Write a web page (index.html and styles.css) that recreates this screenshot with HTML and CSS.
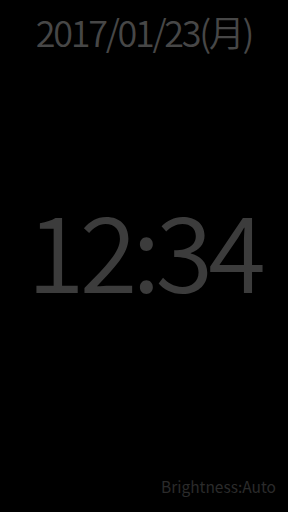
FILE: index.html
```html
<!DOCTYPE html>
<html>
  <head>
    <meta charset='utf-8'>
    <title>Clock</title>
    <link rel="stylesheet" href="styles.css">
  </head>
  <body>
    <div class='screen'>
      <div class='date'>2017/01/23(月)</div>
      <div class='time'>12:34</div>
      <div class='brightness'>Brightness:Auto</div>
    </div>
  </body>
</html>
```

FILE: styles.css
```css
html, body {
  margin: 0;
  padding: 0;
  background-color: #000;
}
body {
  font-family: "Noto Sans CJK JP", "Noto Sans", sans-serif;
}
.screen {
  height: 512px;
  display: flex;
  flex-direction: column;
  overflow: hidden;
}
.date {
  color: #474747;
  font-size: 36px;
  font-weight: 350;
  letter-spacing: -2.3px;
  text-align: center;
  line-height: 1;
  padding-top: 13px;
}
.time {
  margin-top: 146px;
  color: #3c3c3c;
  font-size: 105px;
  font-weight: 350;
  letter-spacing: -5px;
  text-align: center;
  line-height: 1;
}
.brightness {
  margin-top: auto;
  color: #2b2b2b;
  font-size: 15.5px;
  text-align: right;
  padding-right: 12px;
  padding-bottom: 15px;
}
```
